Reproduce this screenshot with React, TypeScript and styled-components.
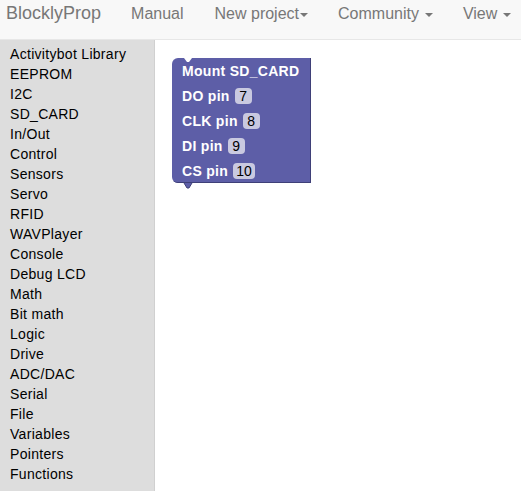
import React from "react";
import styled, { createGlobalStyle } from "styled-components";

const Global = createGlobalStyle`
  html, body { margin: 0; padding: 0; background: #fff; }
  body { font-family: "Liberation Sans", Arial, Helvetica, sans-serif; }
  #root { width: 521px; height: 491px; overflow: hidden; }
`;

const Page = styled.div`
  display: flex;
  flex-direction: column;
  width: 521px;
  height: 491px;
`;

const NavBar = styled.nav`
  height: 39px;
  flex: none;
  background: #f8f8f8;
  border-bottom: 1px solid #e7e7e7;
  display: flex;
  align-items: center;
  white-space: nowrap;
  overflow: hidden;
`;

const Brand = styled.span`
  font-size: 18px;
  color: #777;
  margin-left: 6px;
  margin-right: 30px;
  padding-bottom: 12px;
`;

const NavItem = styled.span<{ $gap: number }>`
  font-size: 16px;
  color: #777;
  margin-right: ${(p) => p.$gap}px;
  padding-bottom: 12px;
  display: inline-flex;
  align-items: center;
`;

const Caret = styled.span<{ $space?: boolean }>`
  display: inline-block;
  width: 0;
  height: 0;
  margin-left: ${(p) => (p.$space ? 6 : 1)}px;
  margin-top: 2px;
  border-top: 4px solid #777;
  border-left: 4px solid transparent;
  border-right: 4px solid transparent;
`;

const Body = styled.div`
  flex: 1;
  display: flex;
  min-height: 0;
`;

const Sidebar = styled.ul`
  width: 155px;
  flex: none;
  margin: 0;
  padding: 4px 0 0 10px;
  list-style: none;
  background: #dddddd;
  border-right: 1px solid #d0d0d0;
  box-sizing: border-box;
`;

const Category = styled.li`
  font-size: 14px;
  line-height: 20px;
  letter-spacing: 0.3px;
  color: #000;
`;

const Workspace = styled.div`
  flex: 1;
  position: relative;
  background: #fff;
`;

const Block = styled.div`
  position: absolute;
  left: 17px;
  top: 18px;
  width: 139px;
  box-sizing: border-box;
  padding: 0 0 0 10px;
  background: #5d5ea7;
  border-radius: 6px 0 0 6px;
  box-shadow: inset -1px -1px 0 #3f4078;
  display: flex;
  flex-direction: column;
`;

const Notch = styled.svg<{ $bottom?: boolean }>`
  position: absolute;
  left: 8px;
  ${(p) => (p.$bottom ? "bottom: -6px;" : "top: 0;")}
`;

const Row = styled.div`
  height: 25px;
  display: flex;
  align-items: center;
  gap: 5px;
  color: #fff;
  font-weight: bold;
  font-size: 14px;
  letter-spacing: 0.3px;
`;

const Field = styled.span`
  display: inline-flex;
  align-items: center;
  justify-content: center;
  min-width: 17px;
  height: 16px;
  padding: 0 3px;
  box-sizing: border-box;
  border-radius: 4px;
  background: #c9c9e0;
  color: #000;
  font-weight: normal;
  font-size: 14px;
  letter-spacing: 0;
`;

const categories = [
  "Activitybot Library",
  "EEPROM",
  "I2C",
  "SD_CARD",
  "In/Out",
  "Control",
  "Sensors",
  "Servo",
  "RFID",
  "WAVPlayer",
  "Console",
  "Debug LCD",
  "Math",
  "Bit math",
  "Logic",
  "Drive",
  "ADC/DAC",
  "Serial",
  "File",
  "Variables",
  "Pointers",
  "Functions",
];

const pins = [
  ["DO pin", "7"],
  ["CLK pin", "8"],
  ["DI pin", "9"],
  ["CS pin", "10"],
];

export default function App() {
  return (
    <>
      <Global />
      <Page>
        <NavBar>
          <Brand>BlocklyProp</Brand>
          <NavItem $gap={31}>Manual</NavItem>
          <NavItem $gap={30}>
            New project
            <Caret />
          </NavItem>
          <NavItem $gap={30}>
            Community
            <Caret $space />
          </NavItem>
          <NavItem $gap={0}>
            View
            <Caret $space />
          </NavItem>
        </NavBar>
        <Body>
          <Sidebar>
            {categories.map((c) => (
              <Category key={c}>{c}</Category>
            ))}
          </Sidebar>
          <Workspace>
            <Block>
              <Notch width="16" height="5" viewBox="0 0 16 5">
                <path d="M0 0 L4 0 L7 4 L9 4 L12 0 L16 0 Z" fill="#fff" />
              </Notch>
              <Row>Mount SD_CARD</Row>
              {pins.map(([label, v]) => (
                <Row key={label}>
                  {label}
                  <Field>{v}</Field>
                </Row>
              ))}
              <Notch $bottom width="16" height="6" viewBox="0 0 16 6">
                <path d="M0 0 L4 0 L7 5 L9 5 L12 0 L16 0 Z" fill="#5d5ea7" />
                <path d="M4 0 L7 5 L9 5 L12 0" fill="none" stroke="#3f4078" strokeWidth="1" />
              </Notch>
            </Block>
          </Workspace>
        </Body>
      </Page>
    </>
  );
}
